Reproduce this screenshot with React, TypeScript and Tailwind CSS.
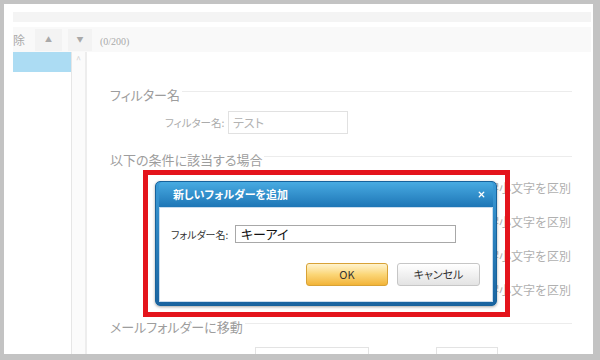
import { X } from 'lucide-react';

const CONDITIONS = ['大文字小文字を区別', '大文字小文字を区別', '大文字小文字を区別', '大文字小文字を区別'];

function SectionHeading({ label }: { label: string }) {
  return (
    <div className="flex h-[16px] shrink-0 items-start pr-[19px]">
      <span className="text-[13px] leading-[16px] text-[#9d9d9d] [font-feature-settings:'palt']">{label}</span>
      <div className="ml-[2px] mt-[4px] flex-1 border-t border-[#ececec]" />
    </div>
  );
}

function AddFolderDialog() {
  return (
    <div className="flex h-[125px] w-[342px] flex-col rounded-[5px] border border-[#17629b] bg-gradient-to-b from-[#3a9ad6] to-[#1a64a0] px-[3px] pb-[3px] shadow-[0_1px_3px_rgba(0,0,0,0.35)]">
      <div className="flex h-[25px] shrink-0 items-center justify-between rounded-t-[4px] bg-gradient-to-b from-[#48abe2] to-[#1d76b6] pl-[14px] pr-[7px]">
        <span className="text-[11px] font-bold text-white [font-feature-settings:'palt']">新しいフォルダーを追加</span>
        <X size={9} strokeWidth={3.5} className="text-white" />
      </div>
      <div className="flex flex-1 flex-col border border-[#c9dced] bg-white pl-[11px] pr-[12px] pt-[17px]">
        <div className="flex items-center">
          <span className="w-[64px] text-[10px] text-[#333] [font-feature-settings:'palt']">フォルダー名:</span>
          <div className="flex h-[18px] w-[221px] items-center border border-[#a8a8a8] pl-[5px] text-[13px] text-[#111] [font-feature-settings:'palt']">
            キーアイ
          </div>
        </div>
        <div className="mt-[20px] flex justify-end gap-[9px]">
          <button className="flex h-[23px] w-[82px] items-center justify-center rounded-[3px] border border-[#d8a236] bg-gradient-to-b from-[#fff3cc] via-[#fbd676] to-[#f2b436] text-[11px] text-[#333]">
            OK
          </button>
          <button className="flex h-[23px] w-[83px] items-center justify-center rounded-[3px] border border-[#c6c6c6] bg-gradient-to-b from-[#ffffff] to-[#e3e3e3] text-[11px] text-[#333] [font-feature-settings:'palt']">
            キャンセル
          </button>
        </div>
      </div>
    </div>
  );
}

export default function App() {
  return (
    <div className="h-[360px] w-[600px] bg-[#c3c3c3] pb-[6px] pl-[4px] pr-[7px] pt-[4px] [font-family:'Noto_Sans_CJK_JP',sans-serif]">
      <div className="relative flex h-full flex-col overflow-hidden bg-white pl-[9px] pr-[2px] pt-[8px]">
        {/* top band */}
        <div className="h-[10px] shrink-0 bg-[#f4f4f4]" />

        {/* toolbar */}
        <div className="mt-[5px] flex h-[25px] shrink-0 items-center bg-[#f9f9f9] text-[#a9a9a9]">
          <div className="flex h-[22px] w-[17px] items-center text-[12px]">除</div>
          <div className="ml-[5px] flex h-[22px] w-[27px] items-center justify-center bg-[#f3f3f3] text-[7px]">▲</div>
          <div className="ml-[6px] flex h-[22px] w-[24px] items-center justify-center bg-[#f3f3f3] text-[7px]">▼</div>
          <span className="ml-[8px] mt-[3px] text-[10px] [font-family:'Liberation_Serif',serif]">(0/200)</span>
        </div>

        {/* body */}
        <div className="flex shrink-0">
          <div className="w-[58px]">
            <div className="h-[20px] bg-[#acdcf3]" />
          </div>
          <div className="w-[14px] border-l border-[#e6e6e6] bg-[#fbfbfb] pt-[3px] text-center text-[9px] leading-[10px] text-[#cfcfcf]">^</div>
          <div className="w-[2px] bg-[#ededed]" />

          <div className="flex flex-1 flex-col pl-[23px]">
            <div className="mt-[35px]">
              <SectionHeading label="フィルター名" />
            </div>
            <div className="mt-[8px] flex shrink-0 items-center pl-[55px]">
              <span className="w-[63px] text-[10.5px] text-[#ababab] [font-feature-settings:'palt']">フィルター名:</span>
              <div className="flex h-[23px] w-[120px] items-center border border-[#e1e1e1] pl-[4px] text-[12px] text-[#b3b3b3] [font-feature-settings:'palt']">
                テスト
              </div>
            </div>

            <div className="mt-[18px]">
              <SectionHeading label="以下の条件に該当する場合" />
            </div>
            <div className="mt-[3px] flex shrink-0 flex-col">
              {CONDITIONS.map((c, i) => (
                <div key={i} className="flex h-[34px] items-center pl-[353px] text-[12px] text-[#b0b0b0]">
                  {c}
                </div>
              ))}
            </div>

            <div className="mt-[12px]">
              <SectionHeading label="メールフォルダーに移動" />
            </div>
            <div className="mt-[12px] flex shrink-0 items-start pl-[145px]">
              <div className="h-[20px] w-[114px] border border-[#e3e3e3]" />
              <div className="ml-[67px] h-[20px] w-[62px] border border-[#e3e3e3]" />
            </div>
          </div>
        </div>

        {/* highlight frame over the dialog */}
        <div className="absolute left-[139px] top-[166px] h-[147px] w-[367px] border-[5px] border-[#e4141c] pl-[7px] pt-[6px]">
          <AddFolderDialog />
        </div>
      </div>
    </div>
  );
}
